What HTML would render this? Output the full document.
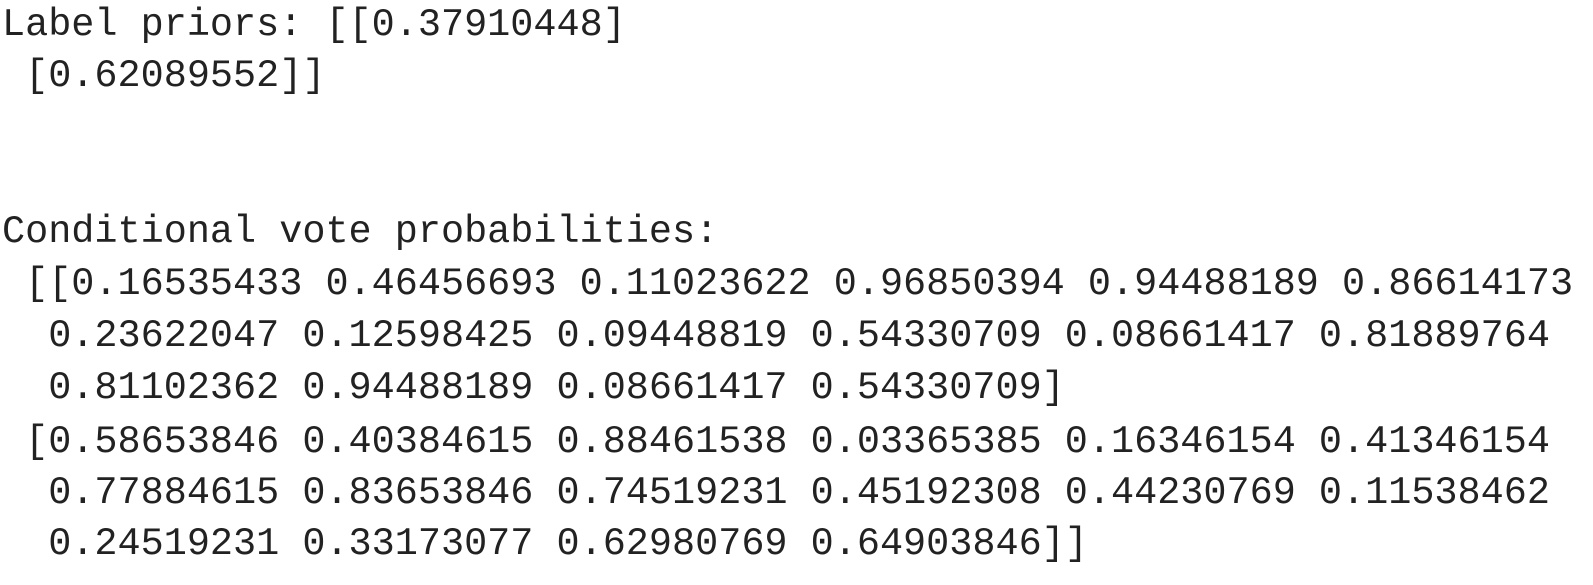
<!DOCTYPE html>
<html><head><meta charset="utf-8"><style>
html,body{margin:0;padding:0;background:#fff;width:1593px;height:585px;overflow:hidden;position:relative}
div{position:absolute;left:2px;margin:0;font-family:"Liberation Mono",monospace;font-size:38.5px;line-height:51px;height:51px;color:#222;white-space:pre}
</style></head><body>
<div style="top:0px">Label priors: [[0.37910448]</div>
<div style="top:51px"> [0.62089552]]</div>
<div style="top:207px">Conditional vote probabilities:</div>
<div style="top:259px"> [[0.16535433 0.46456693 0.11023622 0.96850394 0.94488189 0.86614173</div>
<div style="top:311px">  0.23622047 0.12598425 0.09448819 0.54330709 0.08661417 0.81889764</div>
<div style="top:363px">  0.81102362 0.94488189 0.08661417 0.54330709]</div>
<div style="top:417px"> [0.58653846 0.40384615 0.88461538 0.03365385 0.16346154 0.41346154</div>
<div style="top:468px">  0.77884615 0.83653846 0.74519231 0.45192308 0.44230769 0.11538462</div>
<div style="top:519px">  0.24519231 0.33173077 0.62980769 0.64903846]]</div>
</body></html>
